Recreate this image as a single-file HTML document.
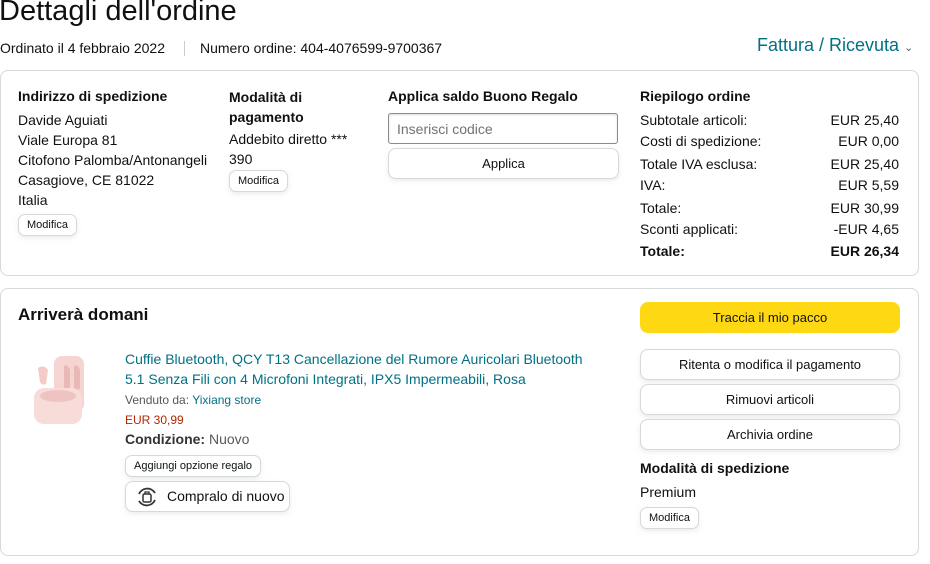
<!DOCTYPE html>
<html><head><meta charset="utf-8"><style>
*{margin:0;padding:0;box-sizing:border-box}
body{width:930px;height:564px;overflow:hidden;background:#fff;font-family:"Liberation Sans",Arial,sans-serif;color:#0f1111;font-size:14px;position:relative}
.a{position:absolute;white-space:nowrap}
.b{font-weight:bold}
.box{position:absolute;border:1px solid #d5d9d9;border-radius:8px}
.btn{position:absolute;border:1px solid #d5d9d9;border-radius:8px;background:#fff;box-shadow:0 2px 5px rgba(213,217,217,.5);text-align:center;font-size:13px}
.sm{position:absolute;border:1px solid #d5d9d9;border-radius:7px;background:#fff;box-shadow:0 2px 5px rgba(213,217,217,.5);font-size:11px;padding:0 8px;height:22px;line-height:20px}
</style></head><body>
<div class="a" style="left:-1px;top:-7px;font-size:29px;line-height:36px">Dettagli dell'ordine</div>
<div class="a" style="left:0;top:40px">Ordinato il 4 febbraio 2022</div>
<div class="a" style="left:184px;top:41px;width:1px;height:15px;background:#ccc"></div>
<div class="a" style="left:200px;top:40px">Numero ordine: 404-4076599-9700367</div>
<div class="a" style="left:757px;top:35px;font-size:18px;color:#007185">Fattura / Ricevuta <span style="font-size:11px;color:#555">&#8964;</span></div>

<div class="box" style="left:0;top:70px;width:919px;height:206px"></div>
<div class="a b" style="left:18px;top:88px">Indirizzo di spedizione</div>
<div class="a" style="left:18px;top:110px;line-height:20px">Davide Aguiati<br>Viale Europa 81<br>Citofono Palomba/Antonangeli<br>Casagiove, CE 81022<br>Italia</div>
<div class="sm" style="left:18px;top:214px">Modifica</div>
<div class="a b" style="left:229px;top:87px;line-height:20px">Modalità di<br>pagamento</div>
<div class="a" style="left:229px;top:129px;line-height:20px">Addebito diretto ***<br>390</div>
<div class="sm" style="left:229px;top:170px">Modifica</div>
<div class="a b" style="left:388px;top:88px">Applica saldo Buono Regalo</div>
<div class="a" style="left:388px;top:113px;width:230px;height:31px;border:1px solid #888c8c;border-radius:3px;padding:7px 8px;color:#6f7373;box-shadow:inset 0 1px 2px rgba(15,17,17,.15)">Inserisci codice</div>
<div class="btn" style="left:388px;top:148px;width:231px;height:31px;line-height:29px">Applica</div>
<div class="a b" style="left:640px;top:88px">Riepilogo ordine</div>
<div class="a" style="left:640px;top:110px;line-height:21px">Subtotale articoli:<br>Costi di spedizione:</div>
<div class="a" style="left:640px;top:154px;line-height:21px">Totale IVA esclusa:<br>IVA:</div>
<div class="a" style="left:640px;top:198px;line-height:21px">Totale:<br>Sconti applicati:</div>
<div class="a b" style="left:640px;top:243px">Totale:</div>
<div class="a" style="left:780px;top:110px;width:119px;text-align:right;line-height:21px">EUR 25,40<br>EUR 0,00</div>
<div class="a" style="left:780px;top:154px;width:119px;text-align:right;line-height:21px">EUR 25,40<br>EUR 5,59</div>
<div class="a" style="left:780px;top:198px;width:119px;text-align:right;line-height:21px">EUR 30,99<br>-EUR 4,65</div>
<div class="a b" style="left:780px;top:243px;width:119px;text-align:right">EUR 26,34</div>

<div class="box" style="left:0;top:288px;width:919px;height:268px"></div>
<div class="a b" style="left:18px;top:305px;font-size:17px">Arriverà domani</div>
<svg class="a" style="left:30px;top:352px" width="60" height="80" viewBox="0 0 60 80">
<rect x="24" y="4" width="30" height="56" rx="8" fill="#f6d4d2"/>
<path d="M34 14 q4 -2 6 4 l0 18 q-3 4 -6 0z M44 14 q4 -2 6 4 l0 18 q-3 4 -6 0z" fill="#eab8b6"/>
<rect x="4" y="36" width="48" height="36" rx="10" fill="#f8dcda"/>
<ellipse cx="28" cy="44" rx="18" ry="6" fill="#efc3c1"/>
<path d="M8 16 q6 -4 10 2 l-2 14 q-4 2 -6 -2z" fill="#f3cbc9"/>
</svg>
<div class="a" style="left:125px;top:349px;line-height:20px;color:#007185">Cuffie Bluetooth, QCY T13 Cancellazione del Rumore Auricolari Bluetooth<br>5.1 Senza Fili con 4 Microfoni Integrati, IPX5 Impermeabili, Rosa</div>
<div class="a" style="left:125px;top:393px;font-size:12px;color:#565959">Venduto da: <span style="color:#007185">Yixiang store</span></div>
<div class="a" style="left:125px;top:413px;font-size:12px;color:#b12704">EUR 30,99</div>
<div class="a" style="left:125px;top:431px;color:#565959"><b style="color:#333">Condizione:</b> Nuovo</div>
<div class="sm" style="left:125px;top:455px">Aggiungi opzione regalo</div>
<div class="btn" style="left:125px;top:481px;width:165px;height:31px;line-height:29px;font-size:14px;text-align:left;padding-left:41px">Compralo di nuovo
<svg style="position:absolute;left:9px;top:4px" width="24" height="22" viewBox="0 0 24 22"><path d="M4 8 A9 9 0 0 1 20 7 M20 14 A9 9 0 0 1 4 15" fill="none" stroke="#333" stroke-width="1.8"/><rect x="8" y="8" width="8" height="8" rx="1.5" fill="none" stroke="#333" stroke-width="1.5"/><path d="M10 8 v-2 h4 v2" fill="none" stroke="#333" stroke-width="1.3"/></svg></div>
<div class="a" style="left:640px;top:302px;width:260px;height:31px;border-radius:8px;background:#ffd814;text-align:center;line-height:31px;font-size:13px">Traccia il mio pacco</div>
<div class="btn" style="left:640px;top:349px;width:260px;height:31px;line-height:29px">Ritenta o modifica il pagamento</div>
<div class="btn" style="left:640px;top:384px;width:260px;height:31px;line-height:29px">Rimuovi articoli</div>
<div class="btn" style="left:640px;top:419px;width:260px;height:31px;line-height:29px">Archivia ordine</div>
<div class="a b" style="left:640px;top:460px">Modalità di spedizione</div>
<div class="a" style="left:640px;top:484px">Premium</div>
<div class="sm" style="left:640px;top:507px">Modifica</div>
</body></html>
